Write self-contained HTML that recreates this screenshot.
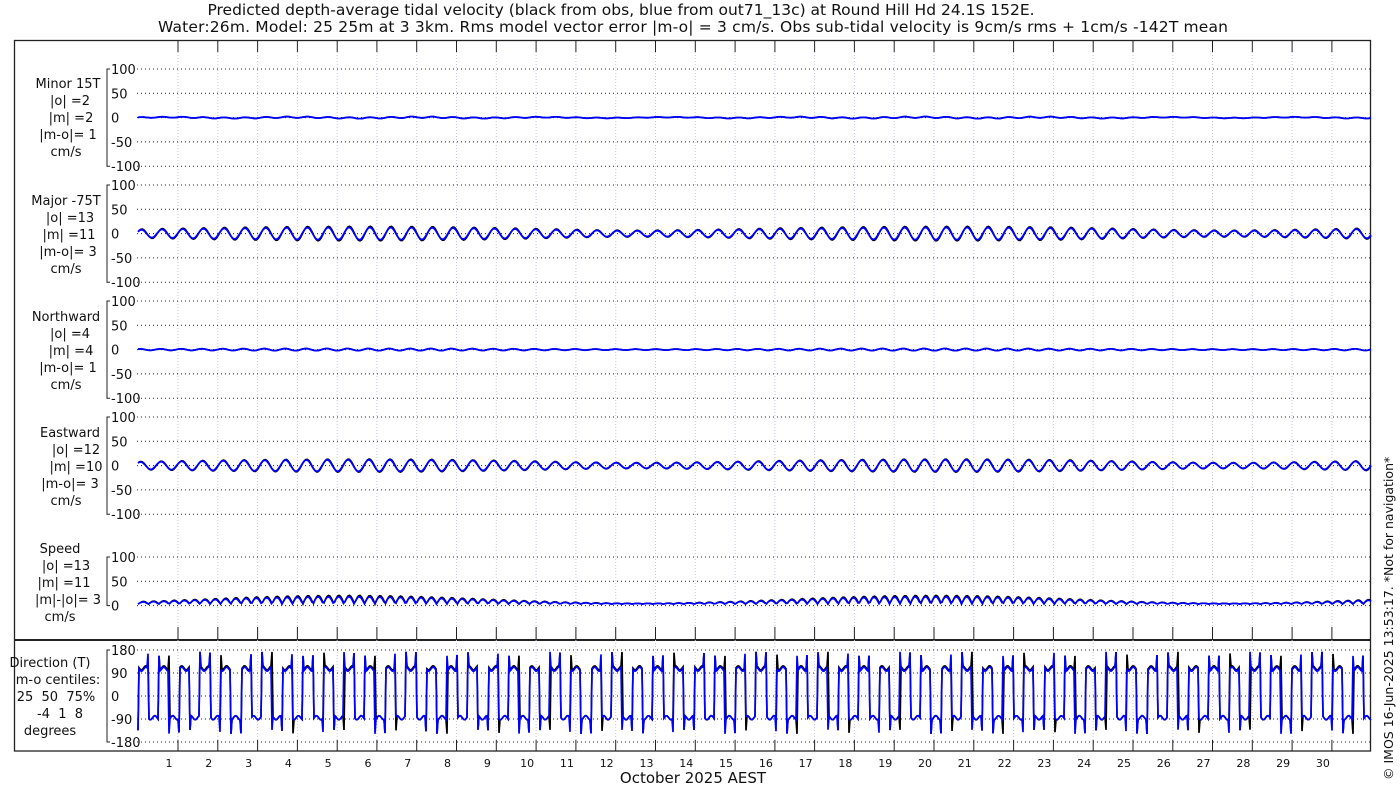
<!DOCTYPE html>
<html><head><meta charset="utf-8"><style>
html,body{margin:0;padding:0;background:#fff;width:1400px;height:800px;overflow:hidden}
svg text{font-family:"DejaVu Sans","Liberation Sans",sans-serif;fill:#111;white-space:pre}
</style></head><body>
<svg id="s" width="1400" height="800" xmlns="http://www.w3.org/2000/svg">
<text x="621" y="15" font-size="15.5" text-anchor="middle">Predicted depth-average tidal velocity (black from obs, blue from out71_13c) at Round Hill Hd 24.1S 152E.</text>
<text x="693" y="32" font-size="15.5" text-anchor="middle" textLength="1070" lengthAdjust="spacing">Water:26m. Model: 25 25m at 3 3km. Rms model vector error |m-o| = 3 cm/s. Obs sub-tidal velocity is 9cm/s rms + 1cm/s -142T mean</text>
<rect x="14.5" y="40.5" width="1356" height="710.5" fill="none" stroke="#222" stroke-width="1.3"/>
<line x1="14" y1="640" x2="1371" y2="640" stroke="#222" stroke-width="2"/>
<text x="693" y="783" font-size="15" text-anchor="middle">October 2025 AEST</text>
<text transform="translate(1393,780) rotate(-90)" font-size="12.5">© IMOS 16-Jun-2025 13:53:17. *Not for navigation*</text>
<g id="g"></g>
</svg>
<script>
var g=document.getElementById('g'),h='';
var X0=138,X1=1371,T0=178,DX=39.79;
function tx(d){return T0+(d-1)*DX;}
for(var d=1;d<=30;d++){var x=tx(d).toFixed(1);
h+='<line x1="'+x+'" y1="52" x2="'+x+'" y2="740" stroke="#c9c6e6" stroke-width="1" stroke-dasharray="1,2"/>';
h+='<line x1="'+x+'" y1="40" x2="'+x+'" y2="52" stroke="#222"/>';
h+='<line x1="'+x+'" y1="627" x2="'+x+'" y2="640" stroke="#222"/>';
h+='<line x1="'+x+'" y1="740" x2="'+x+'" y2="751" stroke="#222"/>';
h+='<text x="'+(tx(d)-9)+'" y="767" font-size="11" text-anchor="middle">'+d+'</text>';}
function axis(top,labels,step,lines){
 var yb=top+step*(labels.length-1);
 h+='<path d="M110,'+top+' H107 V'+yb+' H110" fill="none" stroke="#222"/>';
 for(var i=0;i<labels.length;i++){var y=top+i*step;
 h+='<line x1="137" y1="'+y+'" x2="1371" y2="'+y+'" stroke="#222" stroke-dasharray="1,3"/>';
 h+='<text x="111" y="'+(y+5)+'" font-size="13">'+labels[i]+'</text>';}
 for(var j=0;j<lines.length;j++){h+='<text x="'+lines[j][0]+'" y="'+lines[j][1]+'" font-size="13" text-anchor="middle">'+lines[j][2]+'</text>';}
}
var L=['100','50','0','-50','-100'];
axis(69,L,24.3,[[68,88,'Minor 15T'],[70,105,'|o| =2'],[71,122,'|m| =2'],[68,139,'|m-o|= 1'],[66,156,'cm/s']]);
axis(185,L,24.3,[[66,205,'Major -75T'],[70,222,'|o| =13'],[69,239,'|m| =11'],[68,256,'|m-o|= 3'],[66,273,'cm/s']]);
axis(301,L,24.3,[[66,321,'Northward'],[70,338,'|o| =4'],[71,355,'|m| =4'],[68,372,'|m-o|= 1'],[66,389,'cm/s']]);
axis(417,L,24.3,[[70,437,'Eastward'],[76,454,'|o| =12'],[76,471,'|m| =10'],[70,488,'|m-o|= 3'],[66,505,'cm/s']]);
axis(557,['100','50','0'],24.3,[[60,553,'Speed'],[66,570,'|o| =13'],[64,587,'|m| =11'],[68,604,'|m|-|o|= 3'],[60,621,'cm/s']]);
axis(650,['180','90','0','-90','-180'],23,[[50,667,'Direction (T)'],[58,684,'m-o centiles:'],[56,701,'25  50  75%'],[58,718,' -4  1  8'],[50,735,'degrees']]);
function amp(t){return 0.55+0.45*Math.sin(2*Math.PI*(t-1.5)/14.8);}
function wave(y0,A,ph,sc,col,off){var p='';for(var x=X0;x<=X1;x+=1.5){var t=(x-T0)/DX+1;var a=amp(t);
var v=A*a*Math.sin(2*Math.PI*t*24/12.42+ph)+A*0.25*Math.sin(2*Math.PI*t*24/12+1+ph)+off(t);
p+=(p?'L':'M')+x.toFixed(1)+','+(y0-v*sc).toFixed(1);}
h+='<path d="'+p+'" fill="none" stroke="'+col+'" stroke-width="'+(col=='#000'?1.6:1.8)+'"/>';}
var s=0.485;
function z(){return 0;}
wave(117.6,2,0,s,'#000',function(t){return 0.8*Math.sin(t*2);});wave(117.6,1.8,0.1,s,'#00f',function(t){return 0.8*Math.sin(t*2);});
wave(233.6,20,0,s,'#000',z);wave(233.6,17,0.1,s,'#00f',z);
wave(349.6,3,0.5,s,'#000',z);wave(349.6,2.8,0.6,s,'#00f',z);
wave(465.6,18,0.3,s,'#000',z);wave(465.6,16,0.4,s,'#00f',z);
function spd(col,A,ph){var p='';for(var x=X0;x<=X1;x+=1.5){var t=(x-T0)/DX+1;var v=A*amp(t)*Math.abs(Math.sin(2*Math.PI*t*24/12.42+ph))*0.9+3;
p+=(p?'L':'M')+x.toFixed(1)+','+(605.6-v*s).toFixed(1);}
h+='<path d="'+p+'" fill="none" stroke="'+col+'" stroke-width="1.7"/>';}
spd('#000',20,0);spd('#00f',17,0.1);
function dir(col,ph,jit){var p='';for(var x=X0;x<=X1;x+=1){var t=(x-T0)/DX+1;var c=Math.sin(2*Math.PI*t*24/12.42+ph);
var v=c>0?105+jit:-85;if(Math.abs(c)<0.15){v=c>0?165:-140;}
v+=8*Math.sin(x*0.7);
p+=(p?'L':'M')+x.toFixed(1)+','+(696-v*0.2556).toFixed(1);}
h+='<path d="'+p+'" fill="none" stroke="'+col+'" stroke-width="1.7"/>';}
dir('#000',0,5);dir('#00f',0.05,0);
g.innerHTML=h;
</script>
</body></html>
